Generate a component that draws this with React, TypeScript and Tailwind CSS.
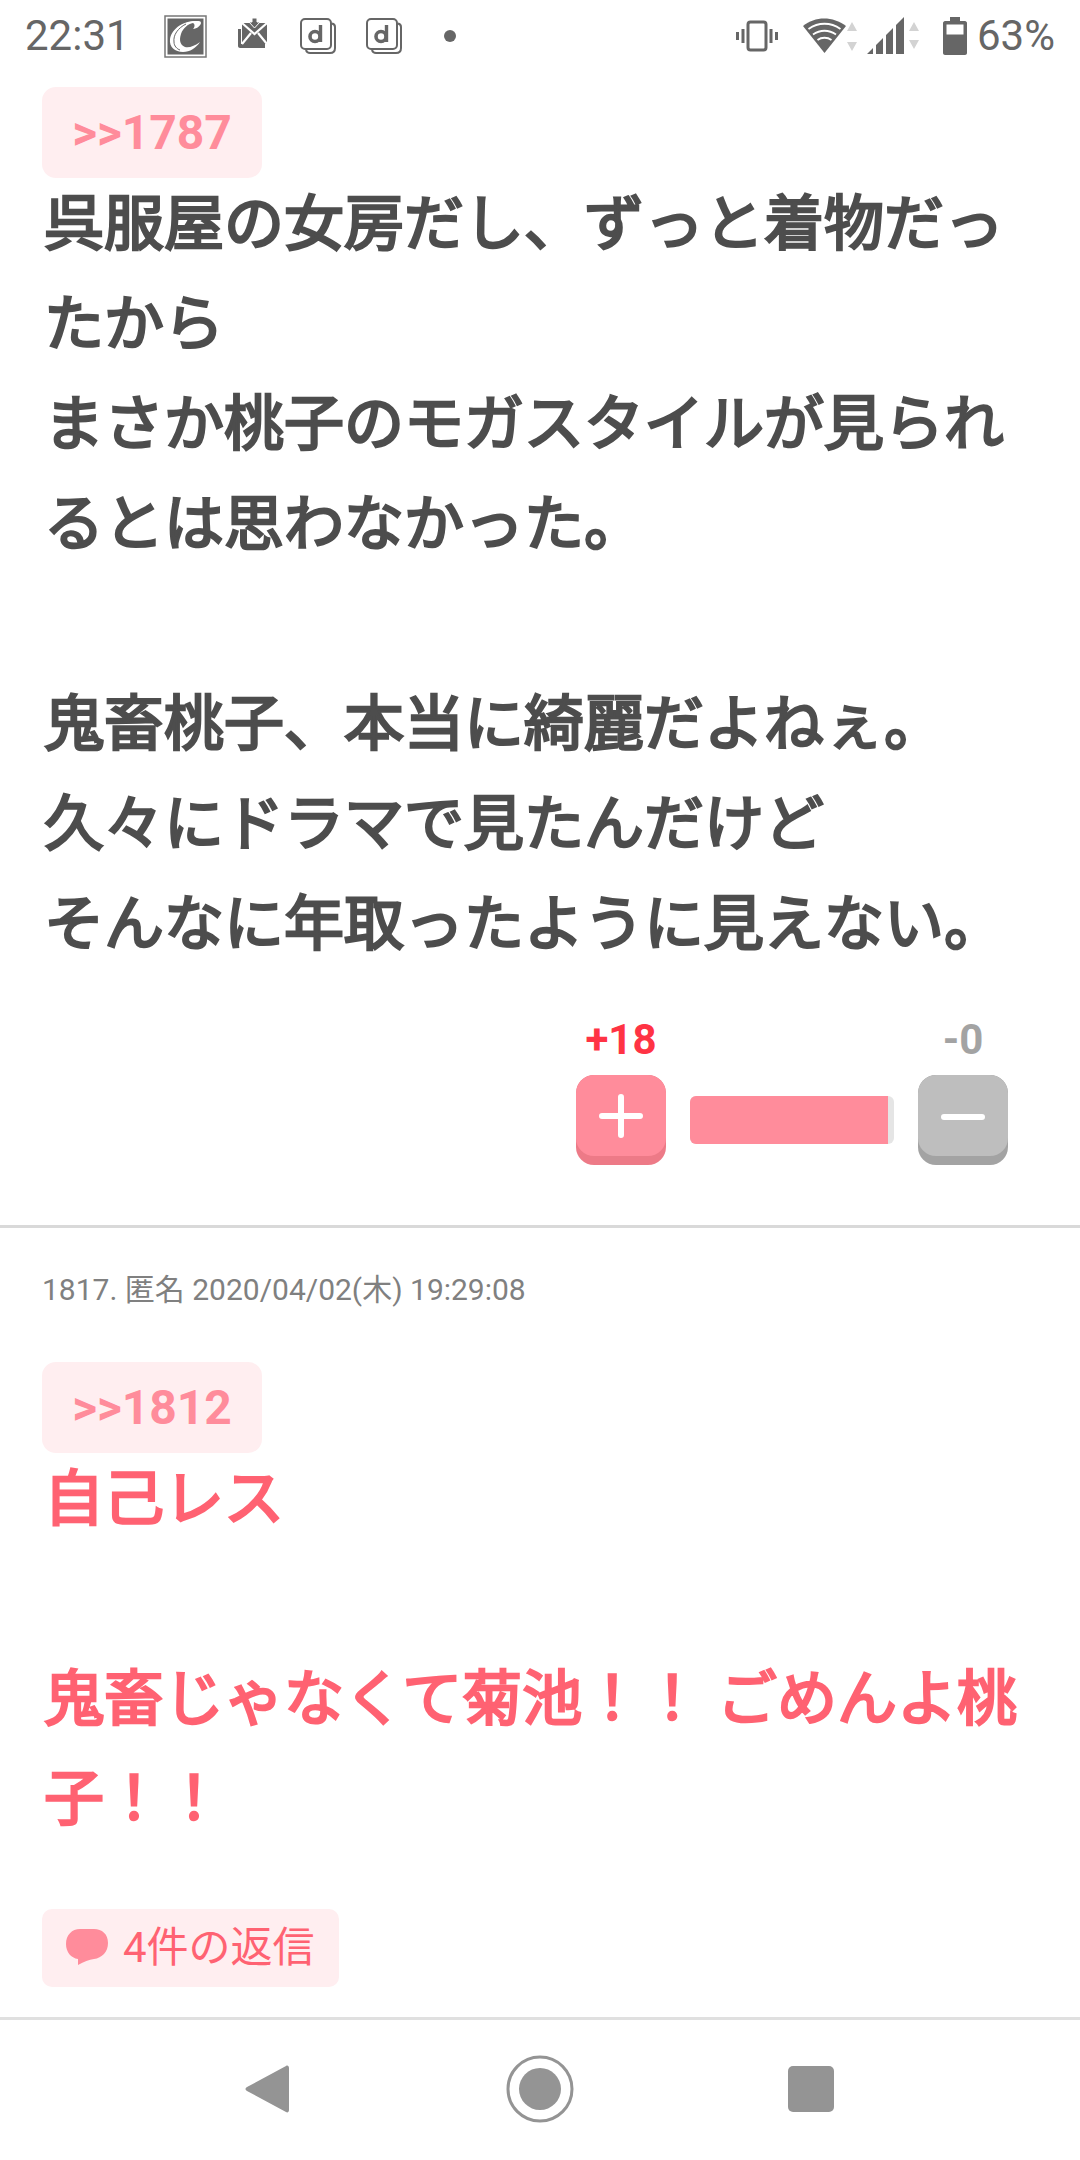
const sans = "font-['Roboto','Noto_Sans_CJK_JP',sans-serif]";

function DocomoIcon({ className }: { className: string }) {
  return (
    <svg className={className} width="36" height="36" viewBox="0 0 36 36" fill="none">
      <path d="M32 5.500c1.800.4 3 1.600 3 3.500v21c0 3-2 5-5 5H10c-2 0-3.500-1.200-4-3" stroke="#666" strokeWidth="2" />
      <rect x="1" y="1" width="30" height="30" rx="4" stroke="#666" strokeWidth="2" />
      <circle cx="15" cy="18.500" r="5" stroke="#666" strokeWidth="3.600" />
      <path d="M20.500 7v17" stroke="#666" strokeWidth="3.400" />
    </svg>
  );
}

function StatusBar() {
  return (
    <div className="flex h-[72px] shrink-0 items-center pl-[25px] pr-[25px]">
      <span className="w-[99px] shrink-0 text-[42px] leading-[72px] text-[#666666]">22:31</span>
      <svg className="ml-[40px] shrink-0" width="43" height="43" viewBox="0 0 43 43">
        <rect x="1" y="1" width="41" height="41" fill="none" stroke="#777" strokeWidth="1.500" />
        <rect x="3.500" y="3.500" width="36" height="36" fill="#666" />
        <path d="M33 6C22 5 8 12 6 24c-1 8 5 13 13 13 7 0 13-4 17-10-5 4-11 6-15 5-5-2-6-7-4-13 2-6 7-10 12-11 2 1 2 4 0 6 4 0 8-4 8-6 0-2-2-2-4-2z" fill="#fff" />
        <path d="M22 9c-8 4-13 11-12 18 0 4 3 7 6 8" fill="none" stroke="#666" strokeWidth="1" />
      </svg>
      <svg className="mb-[6px] ml-[30px] shrink-0" width="32" height="31" viewBox="0 0 32 31">
        <path d="M1 11h3v15h24v4H3c-1 0-2-1-2-2z" fill="#666" />
        <path d="M5 5h25v21H5z" fill="#666" />
        <path d="M5 5l12.500 11L30 5M5 26l9-11M30 26l-9-11" stroke="#fff" strokeWidth="2.200" fill="none" />
        <path d="M15 0h5v4h3l-5.500 6L12 4h3z" fill="#666" stroke="#fff" strokeWidth="1" />
      </svg>
      <DocomoIcon className="ml-[31px] shrink-0" />
      <DocomoIcon className="ml-[30px] shrink-0" />
      <span className="ml-[42px] h-3 w-3 shrink-0 rounded-full bg-[#666666]" />
      <div className="flex-1" />
      <svg className="shrink-0" width="42" height="32" viewBox="0 0 42 32">
        <rect x="12" y="2" width="18" height="28" rx="2.500" fill="none" stroke="#666" strokeWidth="3" />
        <path d="M5.500 9h3v14h-3zM0 12h3v8H0zM33.500 9h3v14h-3zM39 12h3v8h-3z" fill="#666" />
      </svg>
      <svg className="ml-[25px] shrink-0" width="54" height="36" viewBox="0 0 54 36">
        <path d="M0 8C12-2 30-2 43 8L21.500 35z" fill="#666" />
        <path d="M5.500 11c10-7 22-7 32 0M10 16.500c7-5 16-5 23 0M14.500 22c4-3 10-3 14 0" stroke="#fff" strokeWidth="1.800" fill="none" />
        <path d="M49 4l5 9H44zM49 33l5-9H44z" fill="#d3d3d3" />
      </svg>
      <svg className="ml-[10px] shrink-0" width="52" height="38" viewBox="0 0 52 38">
        <path d="M0 37L6 31v6zM9 28l7-7v16H9zM19 18l7-7v26h-7zM29 8l8-8v37h-8z" fill="#666" />
        <path d="M47 5l5 9H42zM47 32l5-9H42z" fill="#d3d3d3" />
      </svg>
      <svg className="ml-[24px] shrink-0" width="24" height="38" viewBox="0 0 24 38">
        <path d="M7 0h10v4h5c1 0 2 1 2 2v30c0 1-1 2-2 2H2c-1 0-2-1-2-2V6c0-1 1-2 2-2h5z" fill="#666" />
        <rect x="3.500" y="7.500" width="17" height="10" fill="#fff" />
      </svg>
      <span className="ml-[10px] text-[42px] leading-[72px] text-[#666666]">63%</span>
    </div>
  );
}

function QuoteBadge({ no }: { no: string }) {
  return (
    <div className="flex h-[91px] w-[220px] items-center justify-center rounded-[14px] bg-[#ffeef0] text-[48px] font-bold text-[#ff8c9b]">
      &gt;&gt;{no}
    </div>
  );
}

function VoteButton({ kind }: { kind: "plus" | "minus" }) {
  const plus = kind === "plus";
  return (
    <div className={`h-[90px] w-[90px] overflow-hidden rounded-[18px] ${plus ? "bg-[#ed7a87]" : "bg-[#a3a3a3]"}`}>
      <div className={`flex h-[81px] items-center justify-center rounded-[18px] ${plus ? "bg-[#ff8c9b]" : "bg-[#bebebe]"}`}>
        <svg width="44" height="44" viewBox="0 0 44 44" className={plus ? "" : "mt-[3px]"}>
          <path d={plus ? "M3 22h38M22 3v38" : "M3 22h38"} stroke="#fff" strokeWidth="6" strokeLinecap="round" />
        </svg>
      </div>
    </div>
  );
}

function VoteRow() {
  return (
    <div className="mt-[38px] flex justify-end pb-[60px] pr-[72px]">
      <div className="flex w-[90px] flex-col items-center">
        <span className="mb-[11px] h-[48px] text-[42px] font-bold leading-[48px] text-[#ff3344]">+18</span>
        <VoteButton kind="plus" />
      </div>
      <div className="ml-[24px] mt-[80px] h-[48px] w-[204px] overflow-hidden rounded-[6px] bg-[#e5e5e5]">
        <div className="h-full w-[198px] bg-[#ff8c9b]" />
      </div>
      <div className="ml-[24px] flex w-[90px] flex-col items-center">
        <span className="mb-[11px] h-[48px] text-[42px] font-bold leading-[48px] text-[#a3a3a3]">-0</span>
        <VoteButton kind="minus" />
      </div>
    </div>
  );
}

function NavBar() {
  return (
    <div className="flex h-[143px] shrink-0 items-center border-t-[3px] border-[#e0e0e0] pb-[3px] pl-[245px]">
      <svg width="44" height="50" viewBox="0 0 44 50">
        <path d="M41 2c1.500-1 3 0 3 2v42c0 2-1.500 3-3 2L2 27c-2-1-2-3 0-4z" fill="#949494" />
      </svg>
      <svg className="ml-[217px]" width="68" height="68" viewBox="0 0 68 68">
        <circle cx="34" cy="34" r="32" fill="none" stroke="#949494" strokeWidth="3" />
        <circle cx="34" cy="34" r="21" fill="#949494" />
      </svg>
      <div className="ml-[214px] h-[46px] w-[46px] rounded-[5px] bg-[#949494]" />
    </div>
  );
}

export default function App() {
  return (
    <div lang="ja" className={`flex h-[2160px] w-[1080px] flex-col overflow-hidden bg-white ${sans}`}>
      <StatusBar />
      <main className="min-h-0 flex-1 overflow-hidden">
        <section className="border-b-[3px] border-[#d9d9d9]">
          <div className="px-[42px] pt-[15px]">
            <QuoteBadge no="1787" />
            <p className="-mt-[3px] pb-[3px] pl-[2px] text-[60px] font-normal leading-[100px] text-[#4d4d4d] [-webkit-text-stroke:2.5px_#4d4d4d]">
              呉服屋の女房だし、ずっと着物だったから
              <br />
              まさか桃子のモガスタイルが見られるとは思わなかった。
              <br />
              <br />
              鬼畜桃子、本当に綺麗だよねぇ。
              <br />
              久々にドラマで見たんだけど
              <br />
              そんなに年取ったように見えない。
            </p>
          </div>
          <VoteRow />
        </section>
        <section className="px-[42px] pt-[42px]">
          <p className="text-[30px] leading-[40px] text-[#808080]">1817. 匿名 2020/04/02(木) 19:29:08</p>
          <div className="mt-[52px]">
            <QuoteBadge no="1812" />
          </div>
          <p className="-mt-[3px] pb-[3px] pl-[2px] text-[60px] font-normal leading-[100px] text-[#ff6272] [-webkit-text-stroke:2.5px_#ff6272]">
            自己レス
            <br />
            <br />
            鬼畜じゃなくて菊池！！ ごめんよ桃子！！
          </p>
          <div className="mt-[56px] flex h-[78px] w-[297px] items-center rounded-[10px] bg-[#ffeef0] pl-[24px]">
            <svg width="42" height="38" viewBox="0 0 42 38">
              <path d="M14 0h14c8 0 14 5 14 14s-6 15-14 16c-5 .5-10 3-16 6l0-6C5 29 0 23 0 15 0 6 6 0 14 0z" fill="#ff8c9b" />
            </svg>
            <span className="ml-[15px] text-[42px] leading-[78px] text-[#ff6272]">4件の返信</span>
          </div>
        </section>
      </main>
      <NavBar />
    </div>
  );
}
